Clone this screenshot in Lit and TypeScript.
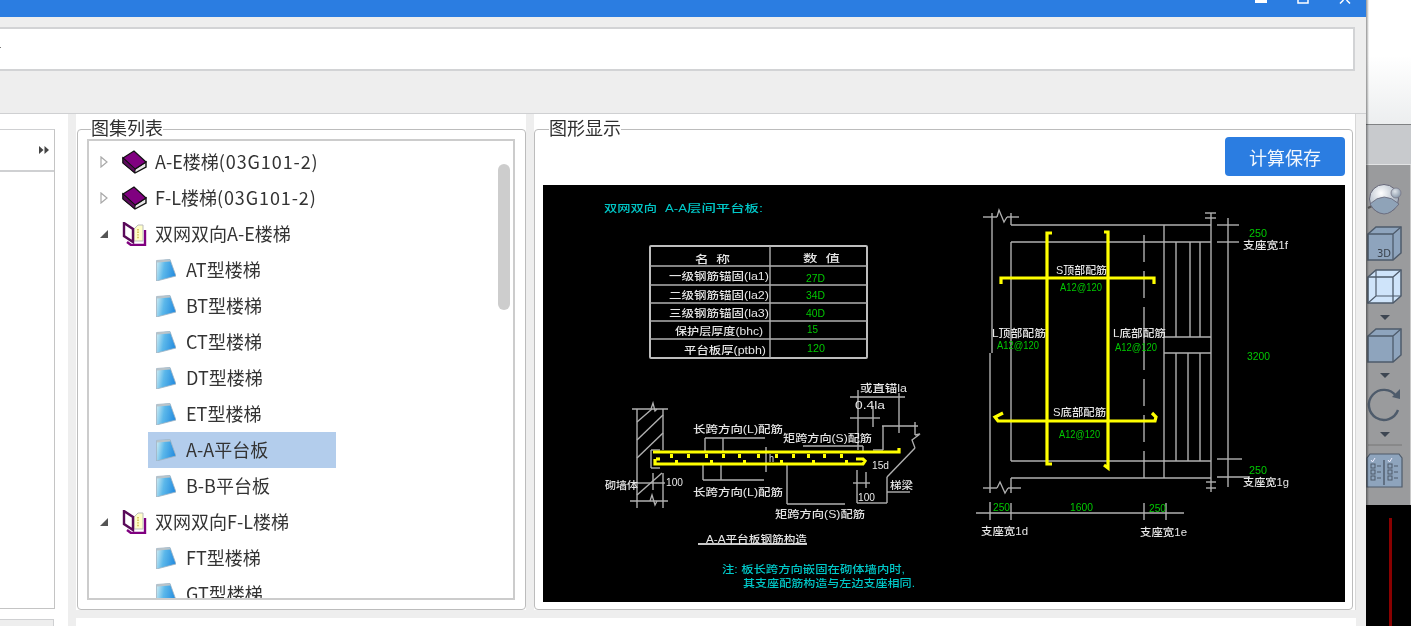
import { LitElement, html, css, svg } from 'lit';
import { customElement } from 'lit/decorators.js';

type Seg = [number, number, number, number];
// x, centre y, width, string, colour
type Label = [number, number, number, string, string];

const WHITE = '#e6e6e6';
const GREEN = '#00c800';
const CYAN = '#00c8c8';

// drawing is in screenshot coordinates, the viewBox does the offset
const GRAY_LINES: Seg[] = [
  // table
  [650, 266, 867, 266], [650, 285, 867, 285], [650, 303, 867, 303], [650, 321, 867, 321], [650, 339, 867, 339], [770, 246, 770, 358],
  // wall
  [637, 409, 637, 508], [663, 409, 663, 450], [663, 473, 663, 508], [632, 409, 668, 409], [630, 501, 668, 501],
  [637, 422, 652, 409], [637, 440, 663, 415], [637, 458, 663, 433], [637, 495, 662, 473],
  // slab end
  [651, 450, 651, 468], [651, 450, 660, 450], [651, 468, 660, 468], [653, 473, 653, 490], [635, 483, 665, 483],
  // long span leaders
  [705, 438, 765, 438], [705, 438, 705, 452], [723, 438, 723, 452], [703, 480, 764, 480], [703, 464, 703, 480], [721, 464, 721, 480], [766, 447, 766, 472],
  // short span leaders
  [803, 446, 863, 446], [863, 446, 863, 452], [787, 465, 787, 504], [787, 504, 845, 504],
  // stair beam
  [857, 470, 857, 503], [857, 503, 887, 503], [887, 477, 887, 503], [887, 477, 915, 448], [887, 492, 910, 492], [853, 483, 870, 483], [866, 472, 866, 488],
  // top right dims
  [882, 426, 918, 426], [883, 426, 883, 450], [873, 450, 883, 450], [899, 393, 899, 433], [915, 422, 915, 435], [850, 397, 905, 397], [858, 390, 858, 450], [850, 418, 880, 418], [873, 407, 873, 427],
  // plan frame
  [983, 217, 997, 217], [1007, 217, 1019, 217], [992, 213, 992, 353], [990, 353, 990, 493], [1011, 213, 1011, 225], [1011, 225, 1211, 225],
  [1011, 242, 1211, 242], [1011, 242, 1011, 461], [1011, 461, 1211, 461], [1211, 213, 1211, 492], [1205, 213, 1216, 213], [1205, 218, 1216, 218],
  [1164, 225, 1164, 478], [1176, 242, 1176, 337], [1190, 242, 1190, 337], [1200, 242, 1200, 337], [1164, 337, 1211, 337], [1164, 353, 1211, 353], [1176, 353, 1176, 461], [1188, 353, 1188, 461], [1200, 353, 1200, 461],
  // centre line
  [1144, 235, 1144, 262], [1144, 271, 1144, 298], [1144, 307, 1144, 370], [1144, 379, 1144, 406], [1144, 415, 1144, 442], [1144, 451, 1144, 478],
  // right dims
  [1228, 218, 1228, 487], [1217, 225, 1239, 225], [1217, 242, 1239, 242], [1217, 459, 1242, 459], [1217, 477, 1250, 477],
  // bottom of plan
  [1011, 478, 1211, 478], [1011, 478, 1011, 493], [983, 488, 997, 488], [1008, 488, 1021, 488], [1206, 482, 1216, 482], [1206, 488, 1216, 488],
  [976, 513, 1184, 513], [990, 502, 990, 520], [1011, 503, 1011, 520], [1144, 503, 1144, 520], [1166, 503, 1166, 520],
];

const GRAY_POLYS = [
  '651,409 653,403 655,411 657,409',
  '650,501 652,495 655,505 657,501',
  '915,435 920,434 912,440 915,448',
  '997,217 999,210 1004,222 1007,217',
  '997,488 1000,482 1005,493 1008,488',
];

const YELLOW_POLYS = [
  '653,452 899,452 899,448',
  '655,459 655,464 863,464 865,461 863,459 856,459',
  '656,459 660,459',
  '1052,233 1047,233 1047,464 1052,464',
  '1104,232 1108,232 1108,468 1104,465',
  '1001,284 1001,278 1154,278 1154,284',
  '1003,413 995,417 998,421 1155,421 1156,417 1152,413',
];

const REBAR_DOTS = [670, 687, 705, 722, 738, 757, 775, 792, 807, 823, 840];

const LABELS: Label[] = [
  [604, 208, 53, '双网双向', CYAN],
  [665, 208, 22, 'A-A', CYAN],
  [687, 208, 76, '层间平台板:', CYAN],
  [695, 259, 35, '名  称', WHITE],
  [803, 258, 37, '数  值', WHITE],
  [669, 276, 100, '一级钢筋锚固(la1)', WHITE],
  [669, 295, 100, '二级钢筋锚固(la2)', WHITE],
  [669, 313, 100, '三级钢筋锚固(la3)', WHITE],
  [675, 331, 88, '保护层厚度(bhc)', WHITE],
  [684, 350, 82, '平台板厚(ptbh)', WHITE],
  [806, 278, 19, '27D', GREEN],
  [806, 295, 19, '34D', GREEN],
  [806, 313, 19, '40D', GREEN],
  [807, 329, 11, '15', GREEN],
  [807, 348, 18, '120', GREEN],
  [860, 388, 47, '或直锚la', WHITE],
  [855, 405, 30, '0.4la', WHITE],
  [693, 429, 90, '长跨方向(L)配筋', WHITE],
  [783, 438, 89, '矩跨方向(S)配筋', WHITE],
  [769, 458, 5, 'h', WHITE],
  [872, 465, 17, '15d', WHITE],
  [666, 482, 17, '100', WHITE],
  [605, 485, 33, '砌墙体', WHITE],
  [890, 485, 23, '梯梁', WHITE],
  [858, 497, 17, '100', WHITE],
  [693, 492, 90, '长跨方向(L)配筋', WHITE],
  [775, 514, 90, '矩跨方向(S)配筋', WHITE],
  [706, 539, 101, 'A-A平台板钢筋构造', WHITE],
  [722, 569, 183, '注: 板长跨方向嵌固在砌体墙内时,', CYAN],
  [743, 583, 172, '其支座配筋构造与左边支座相同.', CYAN],
  [1056, 270, 51, 'S顶部配筋', WHITE],
  [1060, 287, 42, 'A12@120', GREEN],
  [992, 333, 54, 'L顶部配筋', WHITE],
  [997, 345, 42, 'A12@120', GREEN],
  [1113, 333, 53, 'L底部配筋', WHITE],
  [1115, 347, 42, 'A12@120', GREEN],
  [1249, 233, 18, '250', GREEN],
  [1243, 245, 45, '支座宽1f', WHITE],
  [1247, 356, 23, '3200', GREEN],
  [1053, 412, 53, 'S底部配筋', WHITE],
  [1059, 434, 41, 'A12@120', GREEN],
  [1249, 470, 18, '250', GREEN],
  [1243, 482, 46, '支座宽1g', WHITE],
  [993, 507, 17, '250', GREEN],
  [1070, 507, 23, '1600', GREEN],
  [1149, 508, 17, '250', GREEN],
  [981, 531, 47, '支座宽1d', WHITE],
  [1140, 532, 47, '支座宽1e', WHITE],
];

const closedBook = html`<svg class="book" viewBox="0 0 25 24">
  <path d="M1 13 L13 23 L24 17 V12 L13 19 L1 8 Z" fill="#e8e8e8" stroke="#111" stroke-width="1.4"/>
  <path d="M1 8 L12 1 L24 12 L13 19 Z" fill="#800080" stroke="#111" stroke-width="1.2"/>
  <path d="M1 8 L13 19 V23 L1 13 Z" fill="#5a0a5a" stroke="#111" stroke-width="1"/>
</svg>`;

const openBook = html`<svg class="book" viewBox="0 0 25 24">
  <path d="M5 20 L9 23 H23 V8" fill="none" stroke="#800080" stroke-width="2.4"/>
  <path d="M12 7 L16 3 H21 V19 H12 Z" fill="#ffffc8" stroke="#bbb" stroke-width="1"/>
  <path d="M16 7 V17" stroke="#c8b040" stroke-width="1.4" stroke-dasharray="1.4 1.2"/>
  <path d="M2 1 L11 7 V20 L2 14 Z" fill="#fff" stroke="#5a0a5a" stroke-width="2.4"/>
</svg>`;

const note = html`<svg class="note" viewBox="0 0 21 22">
  <defs><linearGradient id="nt" x1="0" y1="0" x2="1" y2="0.2"><stop offset="0" stop-color="#d4eef2"/><stop offset="0.45" stop-color="#5cb8ea"/><stop offset="1" stop-color="#2a90e0"/></linearGradient></defs>
  <path d="M1.5 1.5 L15 0.5 L21 17 L1.5 22 Z" fill="url(#nt)" stroke="#9fb3c2" stroke-width="0.8"/>
  <path d="M2 2.5 L15 1.5" stroke="#b9c3c9" stroke-width="2"/>
</svg>`;

const caretClosed = html`<svg class="caret" viewBox="0 0 8 12"><path d="M1 1 L7 6 L1 11 Z" fill="#fff" stroke="#a8a8a8" stroke-width="1.2"/></svg>`;
const caretOpen = html`<svg class="caret" viewBox="0 0 8 12"><path d="M8 2 V10 H0 Z" fill="#555"/></svg>`;

const FACE = '#8ea4bd';
const EDGE = '#4e5b6b';

const cube = (top: number, fill: string, extra = svg``) => svg`
  <path d="M1369 ${top + 7} L1377 ${top} H1402 V${top + 26} L1394 ${top + 33} H1369 Z" fill=${fill} stroke=${EDGE} stroke-width="1.5"/>
  <path d="M1369 ${top + 7} H1394 V${top + 33} M1394 ${top + 7} L1402 ${top}" fill="none" stroke=${EDGE} stroke-width="1.3"/>
  ${extra}`;

const drop = (y: number) => svg`<path d="M1381 ${y} H1391 L1386 ${y + 5} Z" fill="#3d4652"/>`;

const checkRow = (x: number, y: number) => svg`<rect x=${x} y=${y} width="4" height="4" fill="none" stroke=${EDGE}/><path d="M${x + 6} ${y + 2} H${x + 10}" stroke=${EDGE}/>`;

// each tool strip is cut from screenshot coordinates [top, bottom, drawing]
const TOOLS: [number, number, unknown][] = [
  [165, 220, svg`
    <path d="M1369 208 L1373 206" stroke="#555" stroke-width="2"/>
    <circle cx="1385" cy="199" r="14.5" fill="url(#ball)" stroke="#667" stroke-width="1"/>
    <path d="M1371 204 Q1385 190 1400 204 Q1392 214 1385 214 Q1376 213 1371 204 Z" fill="#8fa3b8" stroke="#667" stroke-width="0.8"/>
    <circle cx="1397" cy="193" r="5" fill="url(#ball2)" stroke="#778" stroke-width="0.8"/>`],
  [220, 265, cube(227, FACE, svg`<text x="1378" y="257" class="tool-text">3D</text>`)],
  [265, 310, cube(270, '#cfe4fa', svg`<path d="M1377 270 V296 L1369 303 M1377 296 H1402" fill="none" stroke=${EDGE} stroke-width="1.2"/>`)],
  [310, 323, drop(315)],
  [323, 367, cube(329, FACE)],
  [367, 382, drop(373)],
  [382, 427, svg`
    <path d="M1397 396 A15 15 0 1 0 1399 410" fill="none" stroke=${EDGE} stroke-width="2.4"/>
    <path d="M1393 397 L1401 399 V389 Z" fill=${EDGE}/>`],
  [427, 441, drop(432)],
  [441, 449, svg`<path d="M1369 445 H1403" stroke="#777" stroke-width="1"/>`],
  [449, 505, svg`
    <path d="M1368 458 L1371 454 H1400 L1403 458 V487 H1368 Z" fill=${FACE} stroke=${EDGE} stroke-width="1.2"/>
    <path d="M1385 460 V485" stroke=${EDGE} stroke-width="1.4"/>
    <path d="M1372 460 L1373.5 462 L1376 458 M1389 460 L1390.5 462 L1393 458" fill="none" stroke="#eef" stroke-width="1"/>
    ${checkRow(1372, 464)}${checkRow(1372, 470)}${checkRow(1372, 476)}
    ${checkRow(1389, 464)}${checkRow(1389, 470)}${checkRow(1389, 476)}`],
];

const cadDrawing = svg`
  <rect x="650" y="246" width="217" height="112" fill="none" stroke="#bdbdbd" stroke-width="2" rx="1"/>
  ${GRAY_LINES.map(([a, b, c, d]) => svg`<line x1=${a} y1=${b} x2=${c} y2=${d} stroke="#b0b0b0" stroke-width="1.4"/>`)}
  ${GRAY_POLYS.map((p) => svg`<polyline points=${p} fill="none" stroke="#b0b0b0" stroke-width="1.3"/>`)}
  <line x1="698" y1="544" x2="807" y2="544" stroke="#c8c8c8" stroke-width="2"/>
  ${YELLOW_POLYS.map((p) => svg`<polyline points=${p} fill="none" stroke="#ffff00" stroke-width="3.2"/>`)}
  ${REBAR_DOTS.map((x) => svg`<rect x=${x} y="454" width="3" height="4" fill="#ffff00"/>`)}
  ${REBAR_DOTS.filter((_, i) => i % 2 === 0).map((x) => svg`<rect x=${x + 5} y="460" width="3" height="3" fill="#ffff00"/>`)}
  ${LABELS.map(([x, y, w, s, c]) => svg`<text x=${x} y=${y} fill=${c} textLength=${w} lengthAdjust="spacingAndGlyphs" class="cad-text">${s}</text>`)}
`;

@customElement('app-root')
export class AppRoot extends LitElement {
  static styles = css`
    :host {
      display: flex;
      width: 1411px;
      height: 626px;
      overflow: hidden;
      font-family: "Noto Sans CJK SC", "Noto Sans", sans-serif;
      background: #eeeeee;
      filter: blur(0.4px);
    }

    .window {
      width: 1366px;
      flex: none;
      display: flex;
      flex-direction: column;
      overflow: hidden;
    }

    .titlebar {
      height: 17px;
      flex: none;
      background: #2b7de1;
      display: flex;
      justify-content: flex-end;
      gap: 30px;
      padding-right: 15px;
    }

    .titlebar svg {
      width: 12px;
      height: 4px;
    }

    .searchbar {
      height: 40px;
      margin: 10px 11px 0 -2px;
      background: #fff;
      border: 2px solid #d2d3d5;
      flex: none;
      position: relative;
    }

    .stub {
      position: absolute;
      left: 0;
      top: 18px;
      width: 1px;
      height: 1px;
      background: #777;
    }

    .body {
      margin-top: 42px;
      flex: 1;
      display: flex;
      border-top: 1px solid #cfd0d2;
      min-height: 0;
    }

    .left {
      width: 68px;
      flex: none;
      background: #fff;
      padding-top: 15px;
      display: flex;
      flex-direction: column;
    }

    .left-box {
      width: 54px;
      height: 478px;
      flex: none;
      border-top: 1px solid #cfd0d2;
      border-right: 1px solid #c4c4c4;
      border-bottom: 1px solid #c4c4c4;
    }

    .left-head {
      height: 40px;
      border-bottom: 2px solid #cfd0d2;
      display: flex;
      align-items: center;
      justify-content: flex-end;
      padding-right: 5px;
    }

    .left-head svg {
      width: 10px;
      height: 8px;
    }

    .left-foot {
      width: 53px;
      margin-top: 10px;
      flex: 1;
      background: #eeeeee;
      border-top: 1px solid #cfd0d2;
      border-right: 1px solid #cfd0d2;
    }

    .main {
      margin-left: 8px;
      width: 1280px;
      flex: none;
      display: flex;
      flex-direction: column;
    }

    .panels {
      height: 496px;
      flex: none;
      display: flex;
      gap: 8px;
    }

    .foot {
      margin-top: 8px;
      flex: 1;
      background: #fff;
    }

    .panel {
      background: #fff;
      padding-top: 15px;
      display: flex;
      flex: none;
    }

    .panel.atlas {
      width: 449px;
      padding-left: 1px;
    }

    .panel.view {
      width: 819px;
      padding-right: 2px;
      border-right: 1px solid #d8d8d8;
    }

    .group {
      position: relative;
      flex: 1;
      min-width: 0;
      box-sizing: border-box;
      border: 1px solid #bcbcbc;
      border-radius: 4px;
    }

    .atlas .group {
      padding: 9px 10px 9px 9px;
    }

    .view .group {
      padding: 7px 7px 7px 8px;
      display: flex;
      flex-direction: column;
    }

    .legend {
      position: absolute;
      top: -13px;
      left: 13px;
      background: #fff;
      font-size: 18px;
      line-height: 20px;
      color: #2f2f2f;
      white-space: nowrap;
    }

    .view .legend {
      left: 14px;
    }

    .tree {
      position: relative;
      height: 100%;
      box-sizing: border-box;
      border: 2px solid #cccccc;
      padding-top: 3px;
      overflow: hidden;
    }

    .scroll-thumb {
      position: absolute;
      left: 409px;
      top: 23px;
      width: 12px;
      height: 146px;
      border-radius: 6px;
      background: #cdcdcd;
    }

    .row {
      height: 36px;
      display: flex;
      align-items: center;
      font-size: 18px;
      color: #333;
      white-space: nowrap;
    }

    .row > span {
      padding-bottom: 2px;
    }

    .row.branch {
      padding-left: 11px;
    }

    .row.leaf {
      margin-left: 59px;
      width: 188px;
      padding-left: 7px;
      box-sizing: border-box;
    }

    .row.leaf.selected {
      background: #b3cdec;
    }

    .code {
      letter-spacing: 0.9px;
    }

    .caret {
      width: 8px;
      height: 12px;
      flex: none;
      margin-right: 14px;
    }

    .book {
      width: 25px;
      height: 24px;
      flex: none;
      margin-right: 8px;
    }

    .note {
      width: 21px;
      height: 22px;
      flex: none;
      margin-right: 10px;
    }

    .save {
      align-self: flex-end;
      width: 120px;
      height: 39px;
      flex: none;
      border: none;
      border-radius: 4px;
      background: #2b7de1;
      color: #f2f7fd;
      font-family: inherit;
      font-size: 18px;
      padding: 0;
    }

    .canvas {
      margin-top: 9px;
      width: 802px;
      height: 417px;
      flex: none;
      display: block;
      background: #000;
    }

    .cad-text {
      font-family: "Liberation Sans", "Noto Sans CJK SC", sans-serif;
      font-size: 10.5px;
      font-weight: 500;
      dominant-baseline: central;
      white-space: pre;
    }

    .side {
      flex: 1;
      position: relative;
      display: flex;
      flex-direction: column;
      min-width: 0;
    }

    .side::before {
      content: '';
      position: absolute;
      left: 0;
      top: 0;
      width: 3px;
      height: 505px;
      background: linear-gradient(to right, rgba(0, 0, 0, 0.42), rgba(0, 0, 0, 0));
    }

    .side-top {
      height: 124px;
      flex: none;
      background: linear-gradient(to bottom, #fff 45%, #eceeef);
    }

    .side-tab {
      height: 39px;
      flex: none;
      background: #c8cacd;
      border-top: 1px solid #808284;
      border-bottom: 1px solid #e2e3e4;
    }

    .toolbar {
      height: 340px;
      flex: none;
      background: #9a9b9d;
      display: flex;
      flex-direction: column;
      border-right: 1px solid #c8c8c8;
    }

    .toolbar svg {
      display: block;
      width: 44px;
      flex: none;
    }

    .tool-text {
      font-family: "DejaVu Sans", sans-serif;
      font-size: 10px;
      fill: #39424d;
    }

    .side-black {
      flex: 1;
      background: #000;
      display: flex;
      justify-content: flex-start;
      padding-left: 23px;
    }

    .red-line {
      width: 2.5px;
      margin-top: 13px;
      background: #8a0000;
    }
  `;

  private _leaf(label: string, selected = false) {
    return html`<div class="row leaf ${selected ? 'selected' : ''}">${note}<span>${label}</span></div>`;
  }

  private _branch(label: string, open: boolean, code = '') {
    return html`<div class="row branch">${open ? caretOpen : caretClosed}${open ? openBook : closedBook}<span>${label}<span class="code">${code}</span></span></div>`;
  }

  render() {
    return html`
      <div class="window">
        <div class="titlebar">
          <svg viewBox="0 0 12 4"><rect width="12" height="3" fill="#fff"/></svg>
          <svg viewBox="0 0 12 4"><path d="M1 0 V3 H11 V0" fill="none" stroke="#fff" stroke-width="1.5"/></svg>
          <svg viewBox="0 0 12 4"><path d="M1 3.5 L4.5 0 M11 3.5 L7.5 0" stroke="#fff" stroke-width="1.5"/></svg>
        </div>
        <div class="searchbar"><span class="stub"></span></div>
        <div class="body">
          <div class="left">
            <div class="left-box">
              <div class="left-head">
                <svg viewBox="0 0 10 8"><path d="M0 0 L4.5 4 L0 8 Z M5.5 0 L10 4 L5.5 8 Z" fill="#444"/></svg>
              </div>
            </div>
            <div class="left-foot"></div>
          </div>
          <div class="main">
            <div class="panels">
              <div class="panel atlas">
                <div class="group">
                  <span class="legend">图集列表</span>
                  <div class="tree">
                    ${this._branch('A-E楼梯', false, '(03G101-2)')}
                    ${this._branch('F-L楼梯', false, '(03G101-2)')}
                    ${this._branch('双网双向A-E楼梯', true)}
                    ${this._leaf('AT型楼梯')}
                    ${this._leaf('BT型楼梯')}
                    ${this._leaf('CT型楼梯')}
                    ${this._leaf('DT型楼梯')}
                    ${this._leaf('ET型楼梯')}
                    ${this._leaf('A-A平台板', true)}
                    ${this._leaf('B-B平台板')}
                    ${this._branch('双网双向F-L楼梯', true)}
                    ${this._leaf('FT型楼梯')}
                    ${this._leaf('GT型楼梯')}
                    <div class="scroll-thumb"></div>
                  </div>
                </div>
              </div>
              <div class="panel view">
                <div class="group">
                  <span class="legend">图形显示</span>
                  <button class="save">计算保存</button>
                  <svg class="canvas" viewBox="543 185 802 417">${cadDrawing}</svg>
                </div>
              </div>
            </div>
            <div class="foot"></div>
          </div>
        </div>
      </div>
      <div class="side">
        <div class="side-top"></div>
        <div class="side-tab"></div>
        <div class="toolbar">
          ${TOOLS.map(([top, bottom, art], i) => html`
            <svg viewBox="1367 ${top} 44 ${bottom - top}" height=${bottom - top}>
              ${i === 0 ? svg`<defs>
                <radialGradient id="ball" cx="0.4" cy="0.3" r="0.7"><stop offset="0" stop-color="#fff"/><stop offset="1" stop-color="#9aa8b8"/></radialGradient>
                <radialGradient id="ball2" cx="0.4" cy="0.35" r="0.7"><stop offset="0" stop-color="#dfe4ea"/><stop offset="1" stop-color="#8393a5"/></radialGradient>
              </defs>` : ''}
              ${art}
            </svg>`)}
        </div>
        <div class="side-black"><div class="red-line"></div></div>
      </div>
    `;
  }
}
